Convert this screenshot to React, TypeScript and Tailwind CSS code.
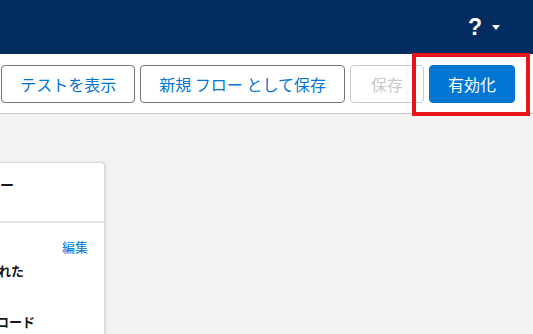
const jp = { fontFamily: '"Noto Sans CJK JP", "Noto Sans", sans-serif' };

function ToolbarButton({
  label,
  variant = 'neutral',
}: {
  label: string;
  variant?: 'neutral' | 'disabled' | 'brand';
}) {
  const styles = {
    neutral: 'border-[#747474] bg-white text-[#0176d3] px-[18px]',
    disabled: 'border-[#c9c9c9] bg-white text-[#c9c9c9] px-[20px]',
    brand: 'border-[#0176d3] bg-[#0176d3] text-white px-[18px]',
  }[variant];

  return (
    <button
      className={`h-[38px] shrink-0 whitespace-nowrap rounded-[4px] border text-[16px] leading-none ${styles}`}
    >
      {label}
    </button>
  );
}

export default function App() {
  return (
    <div className="relative h-[334px] w-[533px] overflow-hidden bg-[#f3f3f3]" style={jp}>
      {/* global header */}
      <header className="flex h-[54px] items-center justify-end bg-[#032d60] pr-[33px]">
        <span
          className="text-[23px] font-bold leading-none text-white"
          style={{ fontFamily: '"Liberation Sans", Arial, sans-serif' }}
        >
          ?
        </span>
        <span className="ml-[10px] mt-[1px] h-0 w-0 border-x-[4px] border-t-[5px] border-x-transparent border-t-white" />
      </header>

      {/* builder toolbar */}
      <div className="flex h-[60px] items-start justify-end gap-[5px] border-b border-[#c9c9c9] bg-white pr-[18px] pt-[11px]">
        <ToolbarButton label="テストを表示" />
        <ToolbarButton label="新規 フロー として保存" />
        <ToolbarButton label="保存" variant="disabled" />
        <ToolbarButton label="有効化" variant="brand" />
      </div>

      {/* canvas */}
      <div className="pt-[48px]">
        <div className="-ml-[84px] w-[189px] rounded-[4px] border border-[#dddbda] bg-white shadow-[1px_0_2px_rgba(0,0,0,0.12)]">
          <div className="h-[60px] border-b-2 border-[#e5e5e5] px-4 pt-[11px]">
            <p className="-ml-[3px] whitespace-nowrap text-[14px] font-bold leading-[20px] text-[#181818]">自動化フロー</p>
          </div>
          <div className="h-[140px] px-4 pt-[15px]">
            <div className="flex justify-end">
              <a className="text-[13px] leading-[18px] text-[#0176d3]">編集</a>
            </div>
            <p className="mt-[6px] whitespace-nowrap text-[13px] font-bold leading-[18px] text-[#181818]">新規作成された</p>
            <p className="-ml-[2px] mt-[33px] whitespace-nowrap text-[13px] font-bold leading-[18px] text-[#181818]">レコードのロード</p>
          </div>
        </div>
      </div>

      {/* annotation highlight */}
      <div className="pointer-events-none absolute left-[412px] top-[53px] h-[63px] w-[118px] border-4 border-[#e8141c]" />
    </div>
  );
}
